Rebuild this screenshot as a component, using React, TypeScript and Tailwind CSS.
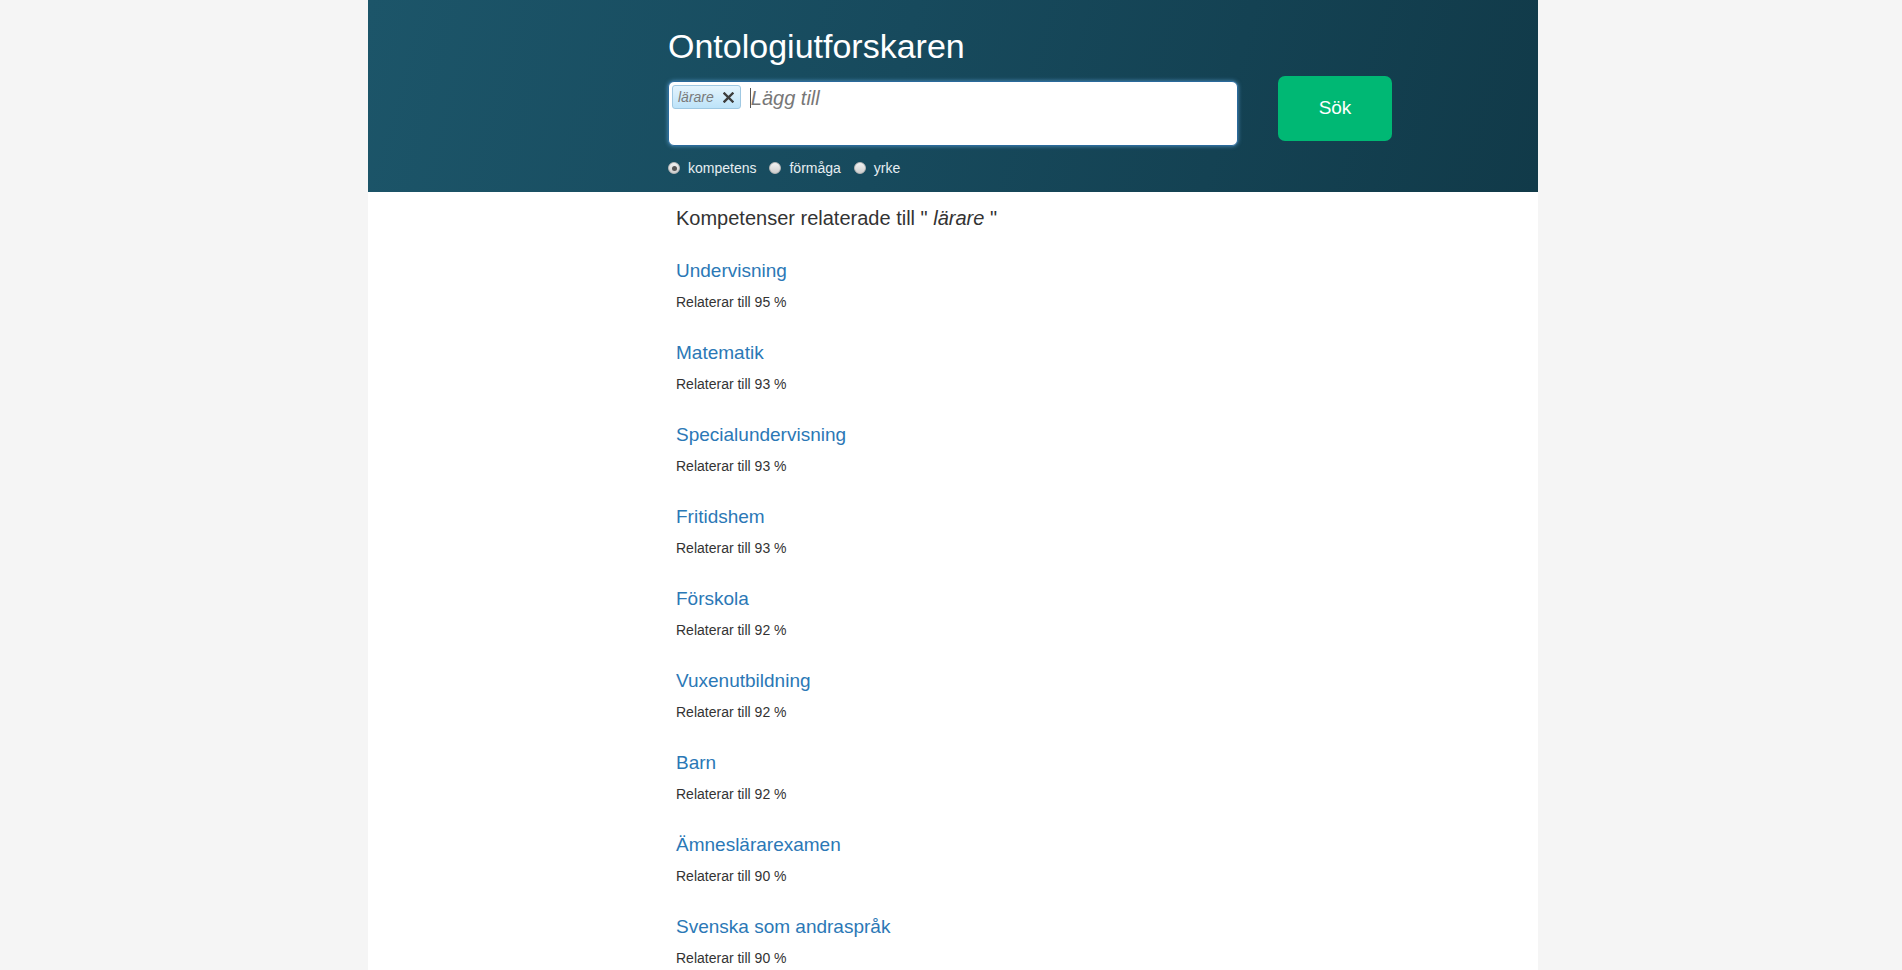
const results = [
  { name: "Undervisning", score: 95 },
  { name: "Matematik", score: 93 },
  { name: "Specialundervisning", score: 93 },
  { name: "Fritidshem", score: 93 },
  { name: "Förskola", score: 92 },
  { name: "Vuxenutbildning", score: 92 },
  { name: "Barn", score: 92 },
  { name: "Ämneslärarexamen", score: 90 },
  { name: "Svenska som andraspråk", score: 90 },
];

const types = [
  { label: "kompetens", checked: true },
  { label: "förmåga", checked: false },
  { label: "yrke", checked: false },
];

function Radio({ checked }: { checked: boolean }) {
  return (
    <span className="flex h-[12px] w-[12px] items-center justify-center rounded-full border border-[#b8b8b8] bg-[linear-gradient(180deg,#f2f2f2,#cfcfcf)]">
      {checked && <span className="h-[5px] w-[5px] rounded-full bg-[#555]" />}
    </span>
  );
}

function Tag({ label }: { label: string }) {
  return (
    <span className="flex h-[24px] items-center gap-[9px] rounded-[3px] border border-[#9fc8e2] bg-[linear-gradient(180deg,#e4f4fd,#bde3f9)] pl-[5px] pr-[6px]">
      <span className="text-[14px] italic text-[#7a7a7a]">{label}</span>
      <svg width="11" height="11" viewBox="0 0 11 11">
        <path d="M1.5 1.5 L9.5 9.5 M9.5 1.5 L1.5 9.5" stroke="#3d3d3d" strokeWidth="2.4" strokeLinecap="square" />
      </svg>
    </span>
  );
}

export default function App() {
  return (
    <div className="flex min-h-screen justify-center bg-[#f5f5f5] pl-[4px] font-['Liberation_Sans',Arial,sans-serif]">
      <div className="min-h-[970px] w-[1170px] bg-white">
        <header className="h-[192px] bg-[linear-gradient(105deg,#1c5569_0%,#174a5d_45%,#113a49_100%)]">
          <div className="ml-[300px] pt-[26px]">
            <h1 className="text-[34px] leading-[40px] text-white">Ontologiutforskaren</h1>
            <div className="mt-[10px] flex items-start gap-[40px]">
              <div className="mt-[5px] flex h-[65px] w-[570px] items-start gap-[9px] rounded-[6px] border border-[#2a6a9c] bg-white p-[3px] shadow-[0_0_4px_rgba(102,175,233,0.7)]">
                <Tag label="lärare" />
                <div className="flex h-[26px] items-center">
                  <span className="h-[20px] w-px bg-[#555]" />
                  <span className="text-[20px] italic text-[#777]">Lägg till</span>
                </div>
              </div>
              <button className="flex h-[65px] w-[114px] items-center justify-center rounded-[7px] bg-[#00b874] text-[19px] text-white">
                Sök
              </button>
            </div>
            <div className="mt-[13px] flex items-center gap-[13px]">
              {types.map((t) => (
                <label key={t.label} className="flex items-center gap-[8px]">
                  <Radio checked={t.checked} />
                  <span className="text-[14px] leading-[18px] text-[#e6eef2]">{t.label}</span>
                </label>
              ))}
            </div>
          </div>
        </header>

        <main className="ml-[308px] pb-10">
          <h4 className="mt-[15px] text-[20px] leading-[22px] text-[#333]">
            Kompetenser relaterade till " <em>lärare</em> "
          </h4>
          <ul className="pt-[1px]">
            {results.map((r) => (
              <li key={r.name} className="pt-[30px]">
                <a href="#" className="block text-[19px] leading-[22px] text-[#2b78b6]">
                  {r.name}
                </a>
                <p className="mt-[10px] text-[14px] leading-[20px] text-[#333]">
                  Relaterar till {r.score} %
                </p>
              </li>
            ))}
          </ul>
        </main>
      </div>
    </div>
  );
}
